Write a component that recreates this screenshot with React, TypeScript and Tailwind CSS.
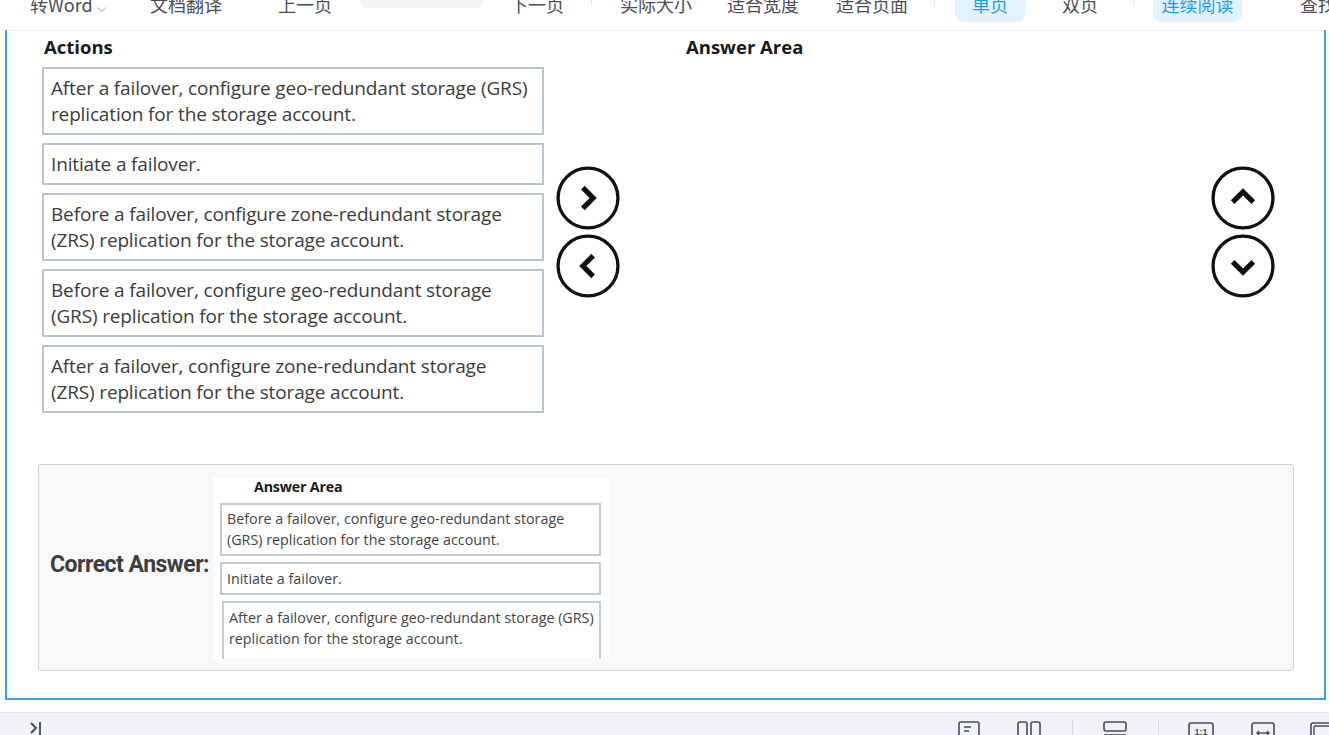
import React from 'react';

const actions = [
  ['After a failover, configure geo-redundant storage (GRS)', 'replication for the storage account.'],
  ['Initiate a failover.'],
  ['Before a failover, configure zone-redundant storage', '(ZRS) replication for the storage account.'],
  ['Before a failover, configure geo-redundant storage', '(GRS) replication for the storage account.'],
  ['After a failover, configure zone-redundant storage', '(ZRS) replication for the storage account.'],
];

const answers = [
  ['Before a failover, configure geo-redundant storage', '(GRS) replication for the storage account.'],
  ['Initiate a failover.'],
  ['After a failover, configure geo-redundant storage (GRS)', 'replication for the storage account.'],
];

function CircleBtn({ dir }: { dir: 'left' | 'right' | 'up' | 'down' }) {
  const paths: Record<string, string> = {
    right: 'M26 21 L36 31 L26 41',
    left: 'M36 21 L26 31 L36 41',
    up: 'M21 35 L31 25 L41 35',
    down: 'M21 27 L31 37 L41 27',
  };
  return (
    <svg width="64" height="64" viewBox="0 0 62 62" className="block">
      <circle cx="31" cy="31" r="29" fill="white" stroke="#111" strokeWidth="3.2" />
      <path d={paths[dir]} fill="none" stroke="#111" strokeWidth="5" strokeLinecap="butt" strokeLinejoin="miter" />
    </svg>
  );
}

export default function App() {
  return (
    <div className="w-[1329px] h-[735px] overflow-hidden bg-white flex flex-col font-['Noto_Sans_CJK_SC','Noto_Sans',sans-serif]">
      {/* top toolbar, scrolled half out of view */}
      <div className="h-[30px] shrink-0 overflow-hidden">
        <div className="flex items-start text-[18px] leading-[18px] -mt-[5px] whitespace-nowrap text-[#4a4d55] *:shrink-0">
          <span className="ml-[30px] w-[120px]">
            转Word <span className="text-[12px] text-[#9a9ca3]">⌵</span>
          </span>
          <span className="w-[128px]">文档翻译</span>
          <span className="w-[82px]">上一页</span>
          <span className="w-[123px] h-[13px] rounded-b-[6px] bg-[#f3f4f8]" />
          <span className="ml-[27px] w-[81px]">下一页</span>
          <span className="w-px h-[11px] bg-[#e3e4e8]" />
          <span className="ml-[28px] w-[107px]">实际大小</span>
          <span className="w-[109px]">适合宽度</span>
          <span className="w-[98px]">适合页面</span>
          <span className="w-px h-[11px] bg-[#e3e4e8]" />
          <span className="ml-[20px] w-[70px] h-[27px] rounded-b-[8px] bg-[#e2f3fd] text-[#1c9cf0] text-center">单页</span>
          <span className="ml-[37px] w-[71px]">双页</span>
          <span className="w-px h-[11px] bg-[#e3e4e8]" />
          <span className="ml-[19px] w-[89px] h-[27px] rounded-b-[8px] bg-[#e2f3fd] text-[#1c9cf0] text-center">连续阅读</span>
          <span className="ml-[58px]">查找</span>
        </div>
      </div>

      {/* page frame */}
      <div className="h-[670px] shrink-0 ml-[5px] w-[1321px] border-2 border-t-0 border-[#3aa2ec] bg-white flex flex-col font-['Open_Sans','Noto_Sans',sans-serif]">
        <div className="h-px bg-[#f0f0f0]" />
        <div className="flex pl-[35px] pt-[4px]">
          {/* Actions column */}
          <div className="w-[502px] shrink-0">
            <div className="text-[18.5px] font-bold text-[#1a1a1a] leading-[24px] ml-[2px] mb-[8px]">Actions</div>
            <div className="flex flex-col gap-[8px]">
              {actions.map((lines, i) => (
                <div key={i} className="border-2 border-[#b8c6d3] px-[7px] py-[6px] text-[19px] leading-[26px] text-[#3c3c3c] tracking-[-0.15px] whitespace-nowrap">
                  {lines.map((l, j) => (
                    <div key={j}>{l}</div>
                  ))}
                </div>
              ))}
            </div>
          </div>
          {/* move buttons */}
          <div className="w-[88px] shrink-0 flex flex-col items-center gap-[4px] pt-[131px]">
            <CircleBtn dir="right" />
            <CircleBtn dir="left" />
          </div>
          {/* answer area */}
          <div className="flex-1 pl-[54px]">
            <div className="text-[18.5px] font-bold text-[#1a1a1a] leading-[24px]">Answer Area</div>
          </div>
          <div className="w-[64px] shrink-0 flex flex-col items-center gap-[4px] pt-[131px] mr-[49px]">
            <CircleBtn dir="up" />
            <CircleBtn dir="down" />
          </div>
        </div>

        {/* correct answer */}
        <div className="mt-[51px] ml-[31px] w-[1256px] h-[207px] shrink-0 rounded-[3px] border border-[#cfd1d4] bg-[#f7f8fa] flex items-center pl-[11px]">
          <div className="font-['Roboto',sans-serif] font-bold text-[23px] text-[#3e3e3e] tracking-[-0.5px] w-[164px] shrink-0 mb-[4px] whitespace-nowrap">
            Correct Answer:
          </div>
          <div className="w-[396px] h-[182px] shrink-0 bg-white overflow-hidden pl-[7px] font-['Open_Sans',sans-serif] ml-[-1px] whitespace-nowrap">
            <div className="text-[14.3px] font-bold text-[#1a1a1a] ml-[34px] leading-[20px] tracking-[-0.2px]">Answer Area</div>
            <div className="flex flex-col gap-[6px] mt-[6px] w-[381px]">
              {answers.map((lines, i) => (
                <div
                  key={i}
                  className={`border-2 border-[#c2ccd6] px-[5px] ${lines.length > 1 ? 'py-[3.5px]' : 'py-[4px]'} ${i === 2 ? 'ml-[2px] h-[60px] pt-[4px]' : ''} text-[14.3px] leading-[21px] text-[#444]`}
                >
                  {lines.map((l, j) => (
                    <div key={j}>{l}</div>
                  ))}
                </div>
              ))}
            </div>
          </div>
        </div>
      </div>

      <div className="h-[12px] shrink-0 bg-white" />

      {/* bottom status bar */}
      <div className="flex-1 bg-[#f1f2f7] border-t border-[#e4e5ea] flex items-start pt-[7px] text-[#4a4d55]">
        <svg width="12" height="16" viewBox="0 0 12 16" className="ml-[30px]">
          <path d="M1 3 L6 8 L1 13" fill="none" stroke="#3f4452" strokeWidth="1.8" />
          <path d="M10 2 V16" stroke="#3f4452" strokeWidth="1.8" />
        </svg>
        <div className="ml-auto flex items-start">
          <svg width="22" height="16" viewBox="0 0 22 16" className="mt-[1px]">
            <rect x="1" y="1" width="20" height="24" rx="2" fill="none" stroke="#4a4d55" strokeWidth="1.6" />
            <path d="M6 6 H13 M6 10 H11" stroke="#4a4d55" strokeWidth="1.6" />
          </svg>
          <svg width="24" height="16" viewBox="0 0 24 16" className="ml-[37px] mt-[1px]">
            <rect x="1" y="1" width="9" height="24" rx="2" fill="none" stroke="#4a4d55" strokeWidth="1.6" />
            <rect x="14" y="1" width="9" height="24" rx="2" fill="none" stroke="#4a4d55" strokeWidth="1.6" />
          </svg>
          <span className="ml-[31px] w-px h-[16px] bg-[#d6d7dc]" />
          <svg width="24" height="16" viewBox="0 0 24 16" className="ml-[30px] mt-[1px]">
            <rect x="1" y="1" width="22" height="9" rx="2" fill="none" stroke="#4a4d55" strokeWidth="1.6" />
            <path d="M1 14 H23" stroke="#4a4d55" strokeWidth="1.6" />
          </svg>
          <span className="ml-[31px] w-px h-[16px] bg-[#d6d7dc]" />
          <svg width="26" height="16" viewBox="0 0 26 16" className="ml-[29px] mt-[2px]">
            <rect x="1" y="1" width="24" height="20" rx="2" fill="none" stroke="#4a4d55" strokeWidth="1.6" />
            <text x="13" y="13" textAnchor="middle" fontSize="9" fontFamily="Liberation Sans" fontWeight="bold" fill="#4a4d55">1:1</text>
          </svg>
          <svg width="24" height="16" viewBox="0 0 24 16" className="ml-[37px] mt-[2px]">
            <rect x="1" y="1" width="22" height="20" rx="2" fill="none" stroke="#4a4d55" strokeWidth="1.6" />
            <path d="M6 11 H18 M8 9 L6 11 L8 13 M16 9 L18 11 L16 13" fill="none" stroke="#4a4d55" strokeWidth="1.4" />
          </svg>
          <svg width="19" height="16" viewBox="0 0 19 16" className="ml-[35px] mt-[2px]">
            <rect x="1" y="1" width="24" height="20" rx="2" fill="none" stroke="#4a4d55" strokeWidth="1.6" />
            <rect x="4" y="4" width="24" height="14" rx="1" fill="none" stroke="#4a4d55" strokeWidth="1.4" />
          </svg>
        </div>
      </div>
    </div>
  );
}
